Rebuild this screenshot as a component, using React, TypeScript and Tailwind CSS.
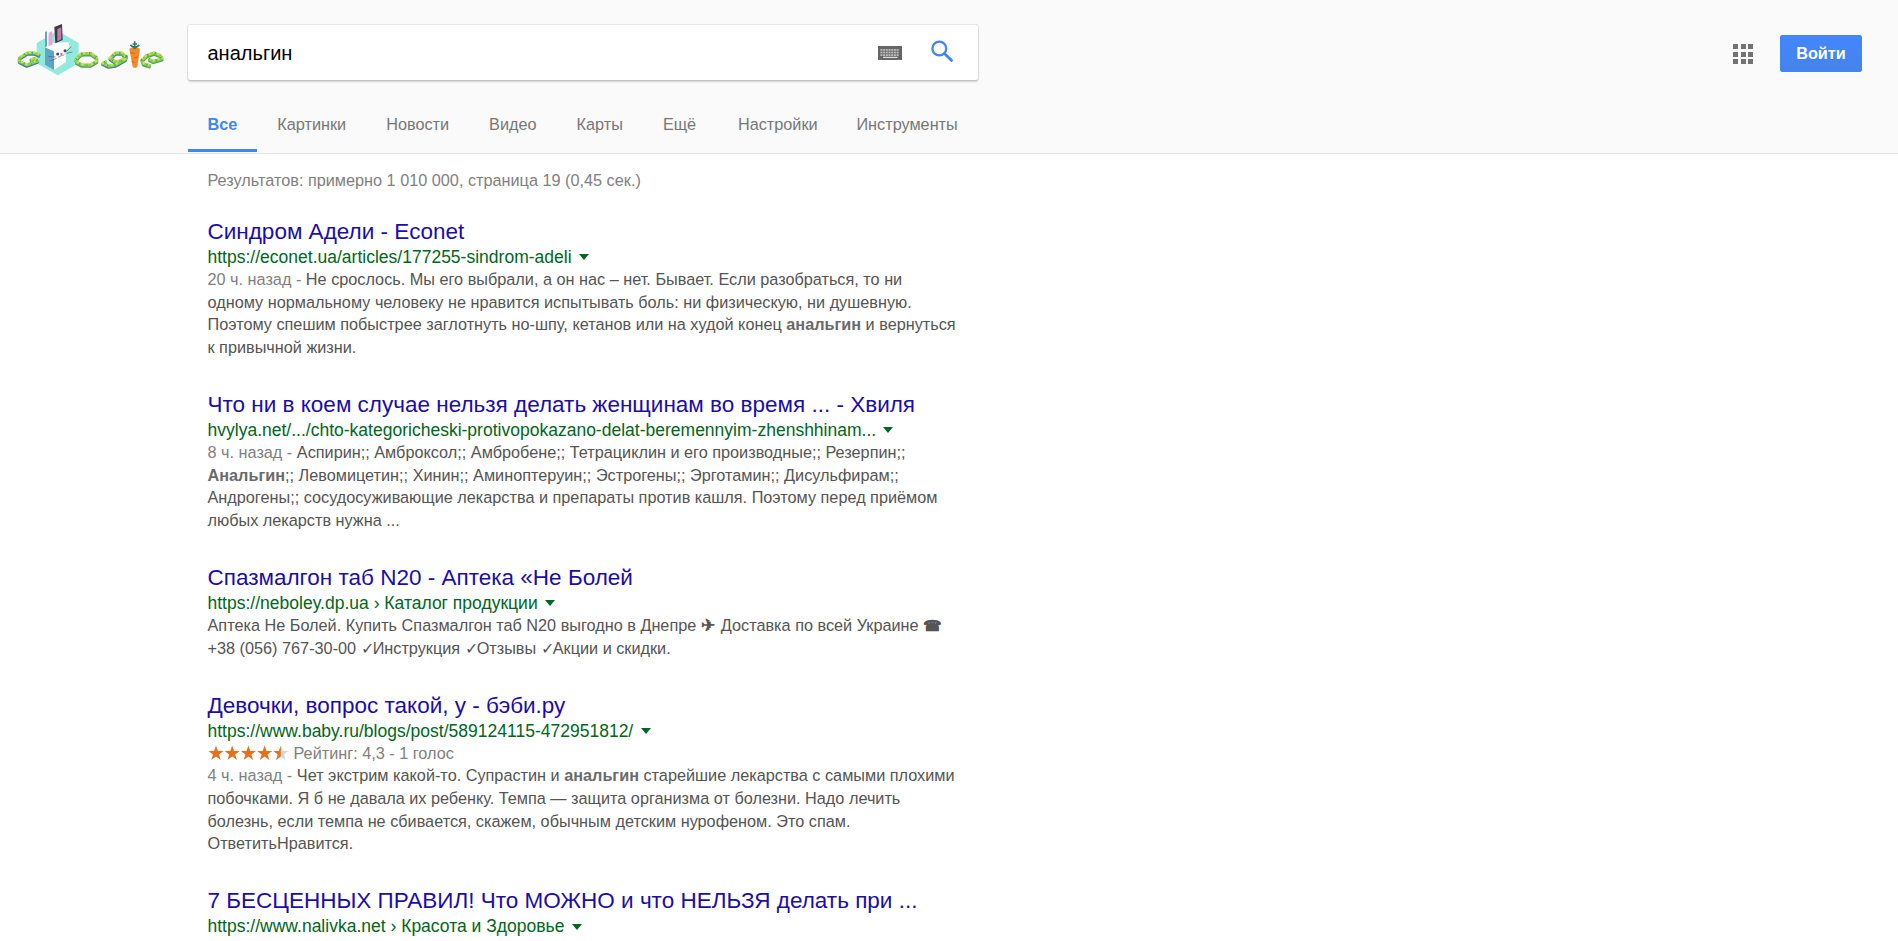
import type { ReactNode } from "react";

const tabs = ["Картинки", "Новости", "Видео", "Карты", "Ещё"];
const toolTabs = ["Настройки", "Инструменты"];

function Ring({ d, shade = "#4fa35e" }: { d: string; shade?: string }) {
  return (
    <g fill="none" strokeLinejoin="round">
      <path d={d} stroke={shade} strokeWidth="9" transform="translate(0 4)" />
      <path d={d} stroke="#8ccc55" strokeWidth="9" />
      <path d={d} stroke="#d3e24c" strokeWidth="6" strokeDasharray="7 7" transform="translate(0 -2)" />
      <path d={d} stroke="#43a75a" strokeWidth="8" strokeDasharray="3 20" />
    </g>
  );
}

function Logo() {
  return (
    <svg className="block h-[54px] w-[150px]" viewBox="45 36 450 162">
      <polygon points="173,62 236,99 236,160 173,196 110,160 110,99" fill="#93e9de" />
      <Ring d="M120 136L104 129H82L58 144V154L80 165L112 153L104 145L90 151" shade="#2d7fa3" />
      <Ring d="M228 148L243 132L272 130L290 143V154L272 165H246L230 157Z" />
      <Ring d="M378 142L366 129H346L330 145L344 155L362 153L379 139L376 148L346 165L326 168L308 160L320 154" shade="#3783a0" />
      <Ring d="M446 147L460 154L486 146L480 136L462 129L440 137L426 150L430 161L452 168" />
      <polygon points="135,112 162,124 162,180 135,164" fill="#5fa6c4" />
      <polygon points="135,112 160,98 206,97 208,112 196,122 198,156 162,180 162,124" fill="#ffffff" />
      <polygon points="135,66 141,64 141,108 135,112" fill="#5fa6c4" />
      <polygon points="141,64 146,68 146,108 141,108" fill="#ffffff" />
      <polygon points="146,68 157,64 157,104 146,108" fill="#ff9bd2" />
      <polygon points="163,51 186,42 188,90 166,100" fill="#3c3a42" />
      <polygon points="172,57 184,52 184,88 172,94" fill="#c079ad" />
      <circle cx="173" cy="132" r="4.5" fill="#384a72" />
      <circle cx="195" cy="122" r="4.5" fill="#384a72" />
      <path d="M179 131l9-3-3 8z" fill="#ff2f6d" />
      <path
        d="M174 141q7 2 10-6 6 4 10-3M145 139l22 2M150 153l20-8M200 124l14-14M200 130l17-4"
        fill="none"
        stroke="#555b70"
        strokeWidth="2"
      />
      <path d="M388 116q15-10 32 0l-8 54q-7 7-14 0z" fill="#f58a25" />
      <path d="M391 128l14 3M402 144l12-3M395 155l9 2" stroke="#cf6812" strokeWidth="3" />
      <path d="M404 118V94M404 114l-13-9M405 114l13-9M398 102h13" fill="none" stroke="#38766f" strokeWidth="5" />
    </svg>
  );
}

function Keyboard() {
  return (
    <svg className="block h-[14px] w-6" viewBox="0 0 24 14">
      <rect width="24" height="14" fill="#666" />
      {[3, 5.6, 8.2].map((y) =>
        [2.4, 5.1, 7.8, 10.5, 13.2, 15.9, 18.6].map((x) => (
          <rect key={`${x}-${y}`} x={x} y={y} width="2" height="1.8" fill="#bdbdbd" />
        ))
      )}
      <rect x="5" y="10.8" width="14.5" height="1.2" fill="#ddd" />
    </svg>
  );
}

function Stars() {
  const d = "M8 0.5L9.9 6H15.5L11 9.4L12.7 15L8 11.6L3.3 15L5 9.4L0.5 6H6.1Z";
  return (
    <svg className="mr-[5px] inline-block h-[15px] w-[81px] align-[-1px]" viewBox="0 0 81 15">
      {[0, 1, 2, 3].map((i) => (
        <path key={i} d={d} fill="#e7711b" transform={`translate(${i * 16.2} 0)`} />
      ))}
      <path d={d} fill="#d5d5d5" transform="translate(64.8 0)" />
      <path d="M8 0.5V11.6L3.3 15L5 9.4L0.5 6H6.1Z" fill="#e7711b" transform="translate(64.8 0)" />
    </svg>
  );
}

function Line({ children }: { children: ReactNode }) {
  return <div className="h-[22.7px] whitespace-nowrap">{children}</div>;
}

function Age({ children }: { children: ReactNode }) {
  return <span className="text-[#808080]">{children} - </span>;
}

function Hit({ children }: { children: ReactNode }) {
  return <b className="font-bold text-[#6a6a6a]">{children}</b>;
}

function Check() {
  return <span className="tracking-[-1px]">✓</span>;
}

function Result({ title, url, children }: { title: string; url: string; children?: ReactNode }) {
  return (
    <article className="mb-[33.3px]">
      <h3 className="h-[27px] whitespace-nowrap text-[22.5px] leading-[26.6px] text-[#1a0dab]">{title}</h3>
      <div className="flex h-[22px] items-start whitespace-nowrap text-[17.5px] leading-[22.4px] text-[#006621]">
        <cite className="tracking-[0.005px] not-italic">{url}</cite>
        <svg className="mt-[8.4px] ml-[7.3px] h-[6px] w-[10px]" viewBox="0 0 10 6">
          <path d="M0 0h10L5 6z" fill="#006621" />
        </svg>
      </div>
      <div className="text-[16.25px] leading-[22.7px] text-[#545454]">{children}</div>
    </article>
  );
}

export default function App() {
  return (
    <div className="h-[941px] overflow-hidden bg-white font-['Liberation_Sans',Arial,sans-serif]">
      <header className="flex h-[154px] flex-col border-b border-[#e5e5e5] bg-[#fafafa]">
        <div className="flex pt-[25px]">
          <div className="-mt-[3px] w-[188px] pl-[15px]">
            <Logo />
          </div>
          <div className="flex h-[55px] w-[790px] items-center rounded-[2px] bg-white pl-[19.5px] shadow-[0_2px_2px_0_rgba(0,0,0,0.16),0_0_0_1px_rgba(0,0,0,0.08)]">
            <span className="grow text-[20px] leading-6 text-black">анальгин</span>
            <Keyboard />
            <svg
              className="-mt-[3px] mr-[24px] ml-[29px] block h-[22px] w-[23px]"
              viewBox="0 0 23 22"
              fill="none"
              stroke="#4285f4"
            >
              <circle cx="8.3" cy="8.5" r="6.9" strokeWidth="2.3" />
              <path d="M13.2 13.3L21.4 21.3" strokeWidth="2.8" />
            </svg>
          </div>
          <div className="ml-auto flex items-start pt-[10px] pr-9">
            <div className="mt-[9px] mr-[27px] grid grid-cols-[5px_5px_5px] gap-[2.5px]">
              {Array.from({ length: 9 }, (_, i) => (
                <span key={i} className="size-[5px] bg-[#737373]" />
              ))}
            </div>
            <button className="h-[37px] w-[82px] rounded-[2px] border border-[#4285f4] bg-gradient-to-b from-[#4387fd] to-[#4683ea] text-[16.25px] font-bold text-white">
              Войти
            </button>
          </div>
        </div>
        <nav className="mt-auto ml-[188px] flex h-[54px] text-[16.25px] leading-[51px] text-[#777]">
          <a className="mr-[0.5px] h-[53px] border-b-[3px] border-[#4285f4] px-[19.5px] font-bold text-[#4285f4]">Все</a>
          {tabs.map((t) => (
            <a key={t} className="px-5">
              {t}
            </a>
          ))}
          <span className="w-[1.8px]" />
          {toolTabs.map((t) => (
            <a key={t} className="pr-[18.8px] pl-5">
              {t}
            </a>
          ))}
        </nav>
      </header>
      <main className="pl-[207.5px]">
        <div className="h-[64.9px] pt-[15px] text-[16.25px] leading-[23px] text-[#808080]">
          Результатов: примерно 1 010 000, страница 19 (0,45 сек.)
        </div>
        <Result title="Синдром Адели - Econet" url="https://econet.ua/articles/177255-sindrom-adeli">
          <Line><Age>20 ч. назад</Age>Не срослось. Мы его выбрали, а он нас – нет. Бывает. Если разобраться, то ни</Line>
          <Line>одному нормальному человеку не нравится испытывать боль: ни физическую, ни душевную.</Line>
          <Line>Поэтому спешим побыстрее заглотнуть но-шпу, кетанов или на худой конец <Hit>анальгин</Hit> и вернуться</Line>
          <Line>к привычной жизни.</Line>
        </Result>
        <Result title="Что ни в коем случае нельзя делать женщинам во время ... - Хвиля" url="hvylya.net/.../chto-kategoricheski-protivopokazano-delat-beremennyim-zhenshhinam...">
          <Line><Age>8 ч. назад</Age>Аспирин;; Амброксол;; Амбробене;; Тетрациклин и его производные;; Резерпин;;</Line>
          <Line><Hit>Анальгин</Hit>;; Левомицетин;; Хинин;; Аминоптеруин;; Эстрогены;; Эрготамин;; Дисульфирам;;</Line>
          <Line>Андрогены;; сосудосуживающие лекарства и препараты против кашля. Поэтому перед приёмом</Line>
          <Line>любых лекарств нужна ...</Line>
        </Result>
        <Result title="Спазмалгон таб N20 - Аптека «Не Болей" url="https://neboley.dp.ua › Каталог продукции">
          <Line>
            Аптека Не Болей. Купить Спазмалгон таб N20 выгодно в Днепре{" "}
            <span className="text-[17px] leading-none font-bold tracking-[1.5px]">✈</span> Доставка по всей Украине{" "}
            <span className="text-[15px] leading-none font-bold">☎</span>
          </Line>
          <Line>+38 (056) 767-30-00 <Check />Инструкция <Check />Отзывы <Check />Акции и скидки.</Line>
        </Result>
        <Result title="Девочки, вопрос такой, у - бэби.ру" url="https://www.baby.ru/blogs/post/589124115-472951812/">
          <Line><span className="text-[#808080]"><Stars />Рейтинг: 4,3 - 1 голос</span></Line>
          <Line><Age>4 ч. назад</Age>Чет экстрим какой-то. Супрастин и <Hit>анальгин</Hit> старейшие лекарства с самыми плохими</Line>
          <Line>побочками. Я б не давала их ребенку. Темпа — защита организма от болезни. Надо лечить</Line>
          <Line>болезнь, если темпа не сбивается, скажем, обычным детским нурофеном. Это спам.</Line>
          <Line>ОтветитьНравится.</Line>
        </Result>
        <Result title="7 БЕСЦЕННЫХ ПРАВИЛ! Что МОЖНО и что НЕЛЬЗЯ делать при ..." url="https://www.nalivka.net › Красота и Здоровье" />
      </main>
    </div>
  );
}
